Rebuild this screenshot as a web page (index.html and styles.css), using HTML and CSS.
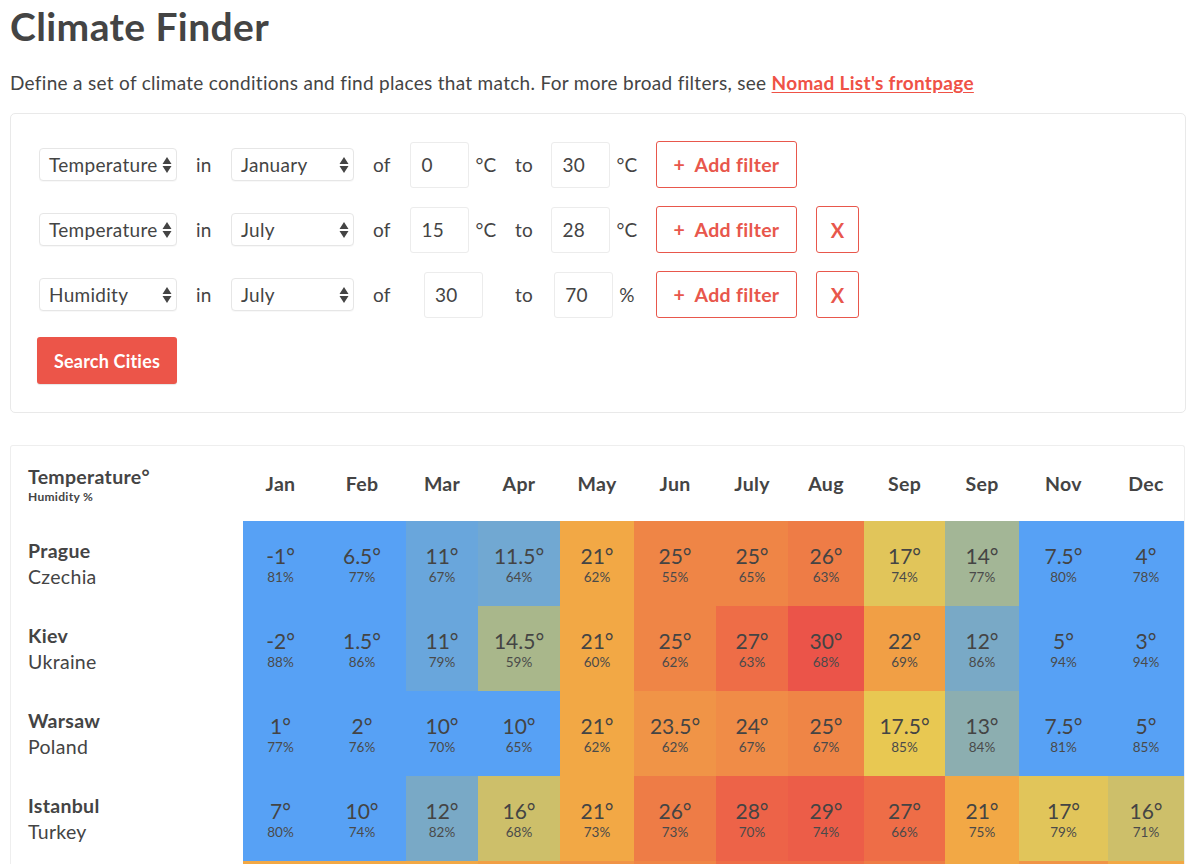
FILE: index.html
```html
<!DOCTYPE html>
<html>
<head>
<meta charset="utf-8">
<link rel="stylesheet" href="styles.css">
</head>
<body>
<div class="page">
  <h1 class="title">Climate Finder</h1>
  <p class="intro">Define a set of climate conditions and find places that match. For more broad filters, see <a class="link" href="#">Nomad List's frontpage</a></p>

  <div class="filters">
    <div class="filter-grid">
      <div class="select w-metric"><span>Temperature</span><svg class="arrows" viewBox="0 0 10 18"><path d="M5 1 L9.5 8 H0.5 Z M0.5 10 H9.5 L5 17 Z"/></svg></div>
      <span class="word">in</span>
      <div class="select w-month"><span>January</span><svg class="arrows" viewBox="0 0 10 18"><path d="M5 1 L9.5 8 H0.5 Z M0.5 10 H9.5 L5 17 Z"/></svg></div>
      <span class="word">of</span>
      <div class="group"><input class="num" type="text" value="0"><span class="unit">°C</span></div>
      <span class="word">to</span>
      <div class="group"><input class="num" type="text" value="30"><span class="unit">°C</span></div>
      <button class="btn-outline add">+&nbsp;&nbsp;Add filter</button>
      <span></span>

      <div class="select w-metric"><span>Temperature</span><svg class="arrows" viewBox="0 0 10 18"><path d="M5 1 L9.5 8 H0.5 Z M0.5 10 H9.5 L5 17 Z"/></svg></div>
      <span class="word">in</span>
      <div class="select w-month"><span>July</span><svg class="arrows" viewBox="0 0 10 18"><path d="M5 1 L9.5 8 H0.5 Z M0.5 10 H9.5 L5 17 Z"/></svg></div>
      <span class="word">of</span>
      <div class="group"><input class="num" type="text" value="15"><span class="unit">°C</span></div>
      <span class="word">to</span>
      <div class="group"><input class="num" type="text" value="28"><span class="unit">°C</span></div>
      <button class="btn-outline add">+&nbsp;&nbsp;Add filter</button>
      <button class="btn-outline remove">X</button>

      <div class="select w-metric"><span>Humidity</span><svg class="arrows" viewBox="0 0 10 18"><path d="M5 1 L9.5 8 H0.5 Z M0.5 10 H9.5 L5 17 Z"/></svg></div>
      <span class="word">in</span>
      <div class="select w-month"><span>July</span><svg class="arrows" viewBox="0 0 10 18"><path d="M5 1 L9.5 8 H0.5 Z M0.5 10 H9.5 L5 17 Z"/></svg></div>
      <span class="word">of</span>
      <div class="group"><input class="num" type="text" value="30"></div>
      <span class="word">to</span>
      <div class="group"><input class="num" type="text" value="70"><span class="unit">%</span></div>
      <button class="btn-outline add">+&nbsp;&nbsp;Add filter</button>
      <button class="btn-outline remove">X</button>
    </div>
    <button class="btn-search">Search Cities</button>
  </div>

  <div class="results">
    <div class="grid">
      <div class="head-label"><div class="hl-main">Temperature°</div><div class="hl-sub">Humidity %</div></div>
      <div class="month">Jan</div><div class="month">Feb</div><div class="month">Mar</div><div class="month">Apr</div><div class="month">May</div><div class="month">Jun</div><div class="month">July</div><div class="month">Aug</div><div class="month">Sep</div><div class="month">Sep</div><div class="month">Nov</div><div class="month">Dec</div>

      <div class="city"><div class="city-name">Prague</div><div class="country">Czechia</div></div>
      <div class="cell c-blue"><div class="t">-1°</div><div class="h">81%</div></div>
      <div class="cell c-blue"><div class="t">6.5°</div><div class="h">77%</div></div>
      <div class="cell c-sky"><div class="t">11°</div><div class="h">67%</div></div>
      <div class="cell c-steel"><div class="t">11.5°</div><div class="h">64%</div></div>
      <div class="cell c-orange"><div class="t">21°</div><div class="h">62%</div></div>
      <div class="cell c-tang"><div class="t">25°</div><div class="h">55%</div></div>
      <div class="cell c-tang"><div class="t">25°</div><div class="h">65%</div></div>
      <div class="cell c-tang2"><div class="t">26°</div><div class="h">63%</div></div>
      <div class="cell c-yellow"><div class="t">17°</div><div class="h">74%</div></div>
      <div class="cell c-sage"><div class="t">14°</div><div class="h">77%</div></div>
      <div class="cell c-blue"><div class="t">7.5°</div><div class="h">80%</div></div>
      <div class="cell c-blue"><div class="t">4°</div><div class="h">78%</div></div>

      <div class="city"><div class="city-name">Kiev</div><div class="country">Ukraine</div></div>
      <div class="cell c-blue"><div class="t">-2°</div><div class="h">88%</div></div>
      <div class="cell c-blue"><div class="t">1.5°</div><div class="h">86%</div></div>
      <div class="cell c-sky"><div class="t">11°</div><div class="h">79%</div></div>
      <div class="cell c-olive"><div class="t">14.5°</div><div class="h">59%</div></div>
      <div class="cell c-orange"><div class="t">21°</div><div class="h">60%</div></div>
      <div class="cell c-tang"><div class="t">25°</div><div class="h">62%</div></div>
      <div class="cell c-hot"><div class="t">27°</div><div class="h">63%</div></div>
      <div class="cell c-red"><div class="t">30°</div><div class="h">68%</div></div>
      <div class="cell c-amber"><div class="t">22°</div><div class="h">69%</div></div>
      <div class="cell c-slate"><div class="t">12°</div><div class="h">86%</div></div>
      <div class="cell c-blue"><div class="t">5°</div><div class="h">94%</div></div>
      <div class="cell c-blue"><div class="t">3°</div><div class="h">94%</div></div>

      <div class="city"><div class="city-name">Warsaw</div><div class="country">Poland</div></div>
      <div class="cell c-blue"><div class="t">1°</div><div class="h">77%</div></div>
      <div class="cell c-blue"><div class="t">2°</div><div class="h">76%</div></div>
      <div class="cell c-blue"><div class="t">10°</div><div class="h">70%</div></div>
      <div class="cell c-blue"><div class="t">10°</div><div class="h">65%</div></div>
      <div class="cell c-orange"><div class="t">21°</div><div class="h">62%</div></div>
      <div class="cell c-warm"><div class="t">23.5°</div><div class="h">62%</div></div>
      <div class="cell c-warm2"><div class="t">24°</div><div class="h">67%</div></div>
      <div class="cell c-tang"><div class="t">25°</div><div class="h">67%</div></div>
      <div class="cell c-lemon"><div class="t">17.5°</div><div class="h">85%</div></div>
      <div class="cell c-teal"><div class="t">13°</div><div class="h">84%</div></div>
      <div class="cell c-blue"><div class="t">7.5°</div><div class="h">81%</div></div>
      <div class="cell c-blue"><div class="t">5°</div><div class="h">85%</div></div>

      <div class="city"><div class="city-name">Istanbul</div><div class="country">Turkey</div></div>
      <div class="cell c-blue"><div class="t">7°</div><div class="h">80%</div></div>
      <div class="cell c-blue"><div class="t">10°</div><div class="h">74%</div></div>
      <div class="cell c-slate"><div class="t">12°</div><div class="h">82%</div></div>
      <div class="cell c-khaki"><div class="t">16°</div><div class="h">68%</div></div>
      <div class="cell c-orange"><div class="t">21°</div><div class="h">73%</div></div>
      <div class="cell c-tang2"><div class="t">26°</div><div class="h">73%</div></div>
      <div class="cell c-hot2"><div class="t">28°</div><div class="h">70%</div></div>
      <div class="cell c-hot3"><div class="t">29°</div><div class="h">74%</div></div>
      <div class="cell c-hot"><div class="t">27°</div><div class="h">66%</div></div>
      <div class="cell c-orange"><div class="t">21°</div><div class="h">75%</div></div>
      <div class="cell c-yellow"><div class="t">17°</div><div class="h">79%</div></div>
      <div class="cell c-khaki"><div class="t">16°</div><div class="h">71%</div></div>

      <div class="city"></div>
      <div class="cell c-orange"></div>
      <div class="cell c-orange"></div>
      <div class="cell c-orange"></div>
      <div class="cell c-amber"></div>
      <div class="cell c-warm"></div>
      <div class="cell c-tang"></div>
      <div class="cell c-hot"></div>
      <div class="cell c-hot"></div>
      <div class="cell c-tang2"></div>
      <div class="cell c-orange"></div>
      <div class="cell c-warm"></div>
      <div class="cell c-orange"></div>
    </div>
  </div>
</div>
</body>
</html>
```

FILE: styles.css
```css
* { box-sizing: border-box; }

html, body {
  margin: 0;
  padding: 0;
  background: #ffffff;
}

body {
  font-family: "Lato", "Noto Sans", sans-serif;
  color: #444444;
  letter-spacing: 0.3px;
}

.page {
  padding: 0 14px 0 10px;
}

.title {
  margin: 0;
  padding-top: 4px;
  font-size: 39px;
  line-height: 44px;
  font-weight: 700;
  color: #444444;
  letter-spacing: 0.4px;
}

.intro {
  margin: 21px 0 0 0;
  font-size: 19px;
  line-height: 28px;
  color: #444444;
}

.link {
  color: #ef5246;
  font-weight: 700;
  text-decoration: underline;
  text-underline-offset: 2px;
}

/* ---------- filters ---------- */
.filters {
  margin-top: 16px;
  width: 1176px;
  border: 1px solid #e9e9e9;
  border-radius: 5px;
  padding: 27px 0 28px 26px;
}

.filter-grid {
  display: grid;
  grid-template-columns: 140px 16px 123px 19px 85px 18px 85px 141px 43px;
  grid-auto-rows: 47px;
  column-gap: 19px;
  row-gap: 18px;
  align-items: center;
  font-size: 19px;
}

.select {
  display: flex;
  align-items: center;
  justify-content: space-between;
  height: 33px;
  margin-left: 2px;
  border: 1px solid #e6e6e6;
  border-radius: 4px;
  background: #ffffff;
  padding: 0 4px 0 9px;
  font-size: 19px;
  color: #444444;
  box-shadow: 0 1px 1px rgba(0,0,0,0.03);
  white-space: nowrap;
}

.select.w-metric { width: 138px; }
.select.w-month { width: 123px; margin-left: 0; padding-right: 4px; }

.arrows {
  width: 10px;
  height: 18px;
  fill: #444444;
  flex: none;
}

.word {
  font-size: 19px;
  color: #444444;
}

.group {
  display: flex;
  align-items: center;
  justify-content: center;
  gap: 6px;
}

.num {
  width: 59px;
  height: 46px;
  border: 1px solid #ececec;
  border-radius: 3px;
  padding: 0 0 0 10px;
  font-family: "Lato", "Noto Sans", sans-serif;
  letter-spacing: 0.3px;
  font-size: 19px;
  color: #444444;
  background: #ffffff;
  outline: none;
}

.unit {
  font-size: 19px;
  color: #444444;
}

.btn-outline {
  height: 47px;
  border: 1.5px solid #e8574c;
  border-radius: 3px;
  background: #ffffff;
  color: #e8574c;
  font-family: "Lato", "Noto Sans", sans-serif;
  letter-spacing: 0.3px;
  font-weight: 700;
  font-size: 19.5px;
  padding: 0;
  cursor: pointer;
}

.btn-outline.add { width: 141px; }
.btn-outline.remove { width: 43px; font-size: 20px; }

.btn-search {
  margin-top: 19px;
  display: block;
  width: 140px;
  height: 47px;
  border: none;
  border-radius: 3px;
  background: #ec5549;
  color: #ffffff;
  font-family: "Lato", "Noto Sans", sans-serif;
  letter-spacing: 0.2px;
  font-weight: 700;
  font-size: 18px;
  padding: 0;
  box-shadow: 0 1px 1px rgba(0,0,0,0.1);
}

/* ---------- results ---------- */
.results {
  margin-top: 32px;
  width: 1175px;
  border: 1px solid #eeeeee;
  border-bottom: none;
  border-radius: 3px 3px 0 0;
}

.grid {
  display: grid;
  grid-template-columns: 232px 75px 88px 72px 82px 74px 82px 72px 76px 81px 74px 89px 76px;
  grid-template-rows: 75px;
  grid-auto-rows: 85px;
}

.head-label {
  display: flex;
  flex-direction: column;
  justify-content: center;
  padding: 2px 0 0 17px;
}

.hl-main {
  font-size: 19.5px;
  font-weight: 700;
  line-height: 22px;
}

.hl-sub {
  font-size: 12px;
  font-weight: 700;
  line-height: 14px;
  margin-top: 2px;
}

.month {
  display: flex;
  align-items: center;
  justify-content: center;
  padding-top: 0;
  font-size: 19.5px;
  font-weight: 700;
}

.city {
  display: flex;
  flex-direction: column;
  justify-content: center;
  padding: 0 0 0 17px;
}

.city-name {
  font-size: 19.5px;
  font-weight: 700;
  line-height: 26px;
}

.country {
  font-size: 19.5px;
  line-height: 26px;
}

.cell {
  display: flex;
  flex-direction: column;
  align-items: center;
  justify-content: center;
  color: #444444;
  padding-top: 3px;
  letter-spacing: 0;
}

.cell .t {
  font-size: 21px;
  line-height: 24px;
}

.cell .h {
  font-size: 13.5px;
  line-height: 19px;
  color: #4a4a4a;
}

.c-blue   { background: #57a1f5; }
.c-sky    { background: #69a6dc; }
.c-steel  { background: #71a8d2; }
.c-slate  { background: #79a9c6; }
.c-teal   { background: #8caeb0; }
.c-sage   { background: #a3b696; }
.c-olive  { background: #a9b78b; }
.c-khaki  { background: #cdbf6a; }
.c-yellow { background: #e1c55a; }
.c-lemon  { background: #e8c852; }
.c-orange { background: #f2a845; }
.c-amber  { background: #f19f45; }
.c-warm   { background: #f09447; }
.c-warm2  { background: #f08c47; }
.c-tang   { background: #ef8546; }
.c-tang2  { background: #ee7c46; }
.c-hot    { background: #ee6d47; }
.c-hot2   { background: #ed6348; }
.c-hot3   { background: #ec5d48; }
.c-red    { background: #eb5449; }
```
